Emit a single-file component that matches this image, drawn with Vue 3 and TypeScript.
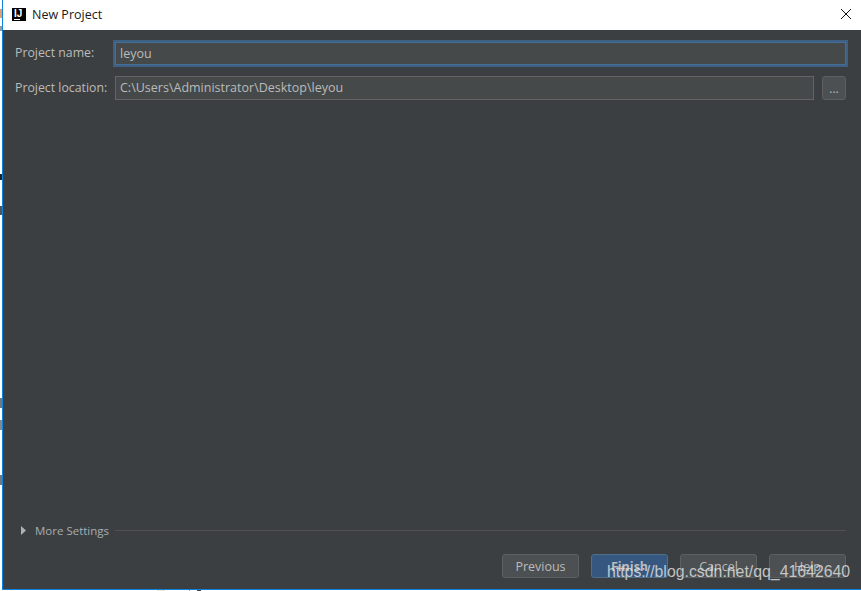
<script setup lang="ts">
const buttons = [
  { label: 'Previous', primary: false },
  { label: 'Finish', primary: true },
  { label: 'Cancel', primary: false },
  { label: 'Help', primary: false },
]

// Slivers of the desktop that stay visible around the dialog
const slivers = [
  { x: 0, y: 9, w: 2, h: 9, c: '#e0a070' },
  { x: 0, y: 26, w: 2, h: 5, c: '#9a9a9a' },
  { x: 0, y: 174, w: 2, h: 6, c: '#222222' },
  { x: 0, y: 206, w: 2, h: 9, c: '#555555' },
  { x: 0, y: 398, w: 2, h: 10, c: '#777777' },
  { x: 0, y: 420, w: 2, h: 10, c: '#888888' },
  { x: 0, y: 475, w: 2, h: 10, c: '#777777' },
  { x: 157, y: 590, w: 8, h: 1, c: '#efe6d2' },
  { x: 189, y: 590, w: 1, h: 1, c: '#6aa6dc' },
  { x: 197, y: 590, w: 4, h: 1, c: '#444444' },
]
</script>

<template>
  <div class="desktop">
    <span
      v-for="(s, i) in slivers"
      :key="i"
      class="sliver"
      :style="{ left: s.x + 'px', top: s.y + 'px', width: s.w + 'px', height: s.h + 'px', background: s.c }"
    ></span>
    <div class="window">
      <header class="titlebar">
        <div class="logo"><span class="logo-text">IJ</span><span class="logo-bar"></span></div>
        <span class="title">New Project</span>
        <svg class="close" width="10" height="10" viewBox="0 0 10 10">
          <path d="M0 0L10 10M10 0L0 10" stroke="#111" stroke-width="1" fill="none" />
        </svg>
      </header>
      <main class="body">
        <div class="form">
          <div class="row">
            <label class="label">Project name:</label>
            <div class="input focused">leyou</div>
          </div>
          <div class="row second">
            <label class="label">Project location:</label>
            <div class="input tall">C:\Users\Administrator\Desktop\leyou</div>
            <button class="browse">...</button>
          </div>
        </div>
        <div class="more">
          <svg class="arrow" width="5" height="9" viewBox="0 0 5 9"><path d="M0 0L5 4.5L0 9Z" fill="#afb1b3" /></svg>
          <span class="more-text">More Settings</span>
          <span class="rule"></span>
        </div>
        <footer class="actions">
          <button v-for="b in buttons" :key="b.label" class="btn" :class="{ primary: b.primary }">{{ b.label }}</button>
        </footer>
      </main>
    </div>
    <span class="watermark">https://blog.csdn.net/qq_41642640</span>
  </div>
</template>

<style>
html, body { margin: 0; background: #fff; overflow: hidden; }
</style>

<style scoped>
.desktop {
  position: relative;
  width: 861px;
  height: 591px;
  padding-left: 2px;
  box-sizing: border-box;
  background: #fff;
  font-family: "Open Sans", "Noto Sans", sans-serif;
}
.sliver { position: absolute; }
.window {
  width: 859px;
  height: 590px;
  box-sizing: border-box;
  border-left: 1px solid #0a84e0;
  border-bottom: 1px solid #0a84e0;
  display: flex;
  flex-direction: column;
}
.titlebar {
  height: 30px;
  flex: none;
  background: #fff;
  display: flex;
  align-items: center;
  padding-left: 9px;
  padding-right: 10px;
}
.logo {
  width: 14px;
  height: 13px;
  background: #000;
  position: relative;
  margin: -2px 6px 0 0;
  overflow: hidden;
}
.logo-text {
  position: absolute;
  left: 2px;
  top: 0;
  color: #fff;
  font: bold 10px/11px "Liberation Sans", sans-serif;
}
.logo-bar {
  position: absolute;
  left: 2px;
  bottom: 1px;
  width: 6px;
  height: 1px;
  background: #fff;
}
.title {
  font-size: 12.5px;
  line-height: 28px;
  color: #1a1a1a;
  flex: 1;
}
.close { flex: none; margin-top: -2px; }
.body {
  flex: 1;
  background: #3c3f41;
  display: flex;
  flex-direction: column;
  min-height: 0;
}
.form {
  flex: 1;
  padding: 12px 15px 0 12px;
}
.row {
  display: flex;
  align-items: center;
}
.second { margin-top: 11px; }
.label {
  width: 100px;
  flex: none;
  font-size: 12.3px;
  margin-top: -2px;
  color: #bbbbbb;
}
.input {
  flex: 1;
  height: 23px;
  box-sizing: border-box;
  line-height: 21px;
  border: 1px solid #646464;
  background: #45494a;
  color: #bbbbbb;
  font-size: 12.5px;
  padding-left: 4px;
}
.tall { height: 24px; line-height: 22px; }
.focused {
  outline: 2px solid #3d6185;
  outline-offset: 0;
  border-color: #466d94;
}
.browse {
  flex: none;
  width: 24px;
  height: 24px;
  margin-left: 8px;
  box-sizing: border-box;
  padding: 0;
  border: 1px solid #5e6060;
  border-radius: 3px;
  background: #4c5052;
  color: #bbbbbb;
  font-size: 12px;
  font-family: inherit;
}
.more {
  display: flex;
  align-items: center;
  padding-left: 18px;
  padding-right: 15px;
  height: 18px;
  flex: none;
}
.arrow { flex: none; margin-right: 9px; }
.more-text { font-size: 11.5px; color: #a6aeb3; }
.rule { flex: 1; height: 1px; background: #515151; margin-left: 6px; }
.actions {
  display: flex;
  justify-content: flex-end;
  padding: 15px 15px 11px 0;
  gap: 12px;
  flex: none;
}
.btn {
  width: 77px;
  height: 24px;
  box-sizing: border-box;
  padding: 0;
  border: 1px solid #5e6060;
  border-radius: 3px;
  background: #4c5052;
  color: #bbbbbb;
  font-size: 12.5px;
  font-family: inherit;
}
.primary {
  background: #365880;
  border-color: #4c708c;
  font-weight: 700;
}
.watermark {
  position: absolute;
  left: 607px;
  top: 561px;
  font: 15.85px/22px "Liberation Sans", sans-serif;
  color: rgba(232, 232, 232, 0.78);
  white-space: nowrap;
}
</style>
